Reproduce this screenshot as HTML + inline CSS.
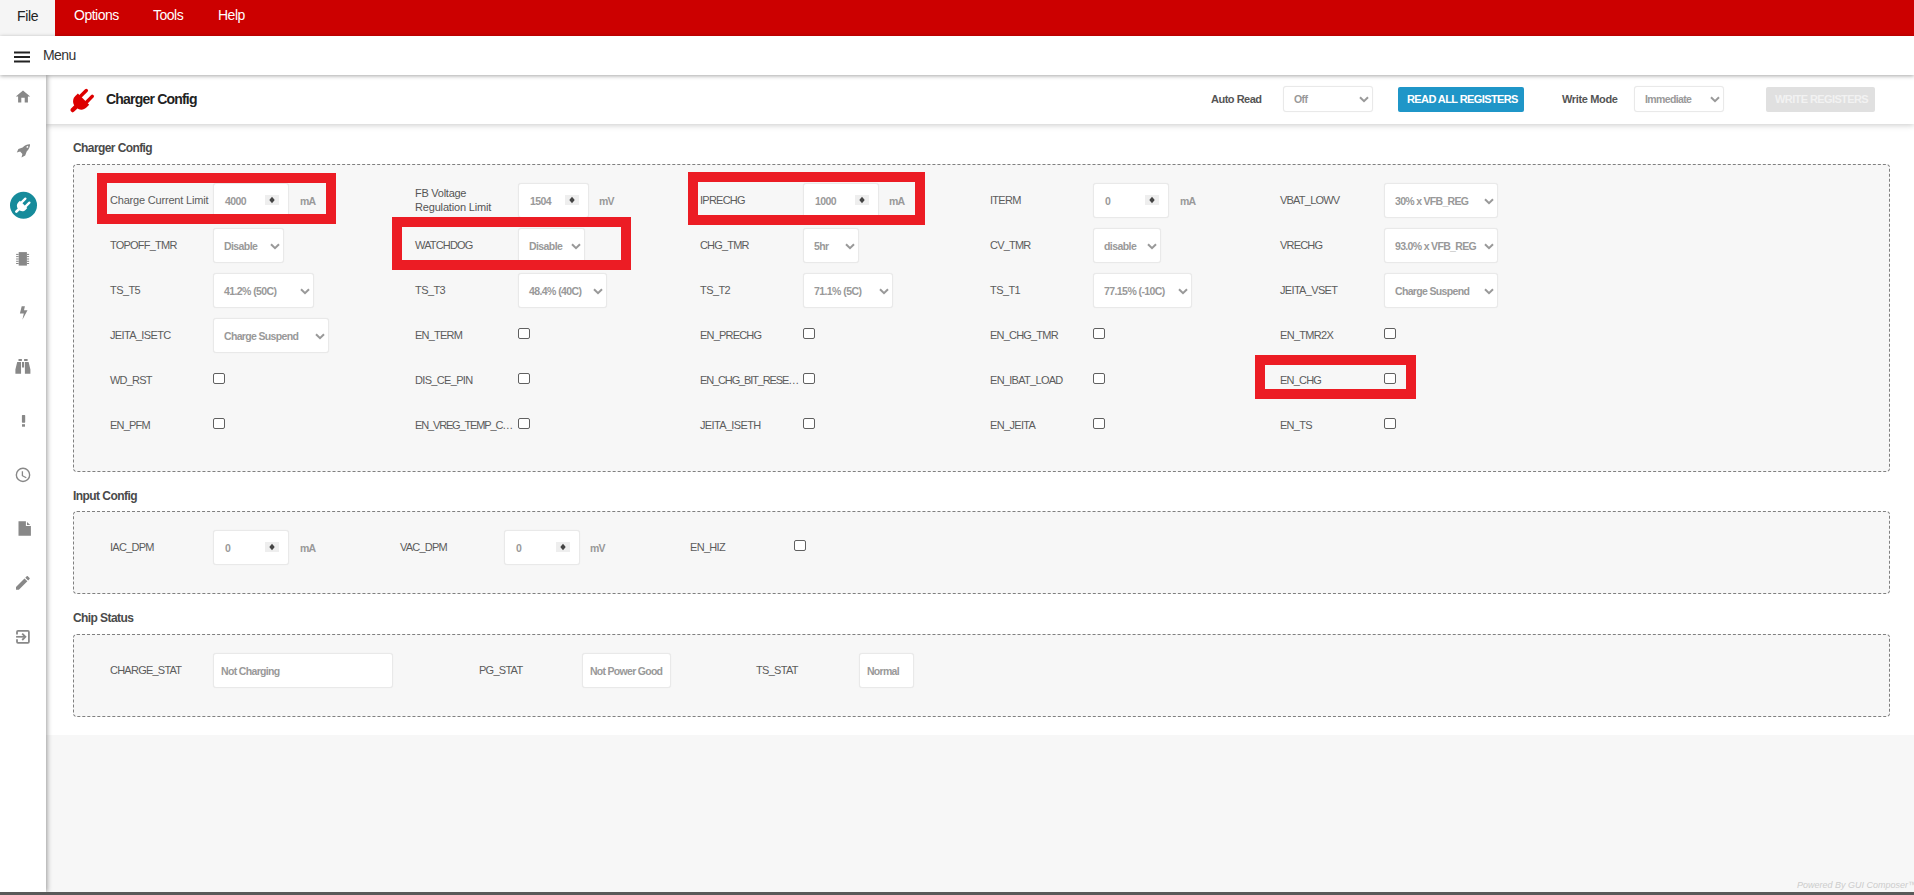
<!DOCTYPE html>
<html><head><meta charset="utf-8">
<style>
*{box-sizing:border-box;margin:0;padding:0}
html,body{width:1914px;height:895px;overflow:hidden;background:#fff;font-family:"Liberation Sans",sans-serif;position:relative}
.a{position:absolute}
.t{white-space:nowrap}
#top{left:0;top:0;width:1914px;height:36px;background:#cc0000}
#file{left:0;top:0;width:55px;height:36px;background:#f5f5f5}
#menubar{left:0;top:36px;width:1914px;height:39px;background:#fff;box-shadow:0 1px 4px rgba(0,0,0,.35);z-index:3}
#side{left:0;top:75px;width:46px;height:817px;background:#fff;box-shadow:1px 0 5px rgba(0,0,0,.4);z-index:2}
#main{left:46px;top:75px;width:1868px;height:817px;background:#f7f7f7}
#hdr{left:46px;top:75px;width:1868px;height:49px;background:#fff;box-shadow:0 1px 6px rgba(0,0,0,.22);z-index:1}
#cont{left:46px;top:124px;width:1868px;height:611px;background:#fff}
#bot{left:0;top:892px;width:1914px;height:3px;background:#595959;z-index:4}
.box{left:73px;width:1817px;border:1px dashed #808080;border-radius:4px;background:#f7f7f7}
.inp{height:35px;background:#fff;border:1px solid #e9e9e9;border-radius:3px;box-shadow:0 0 1px rgba(0,0,0,.08)}
.spin{width:14px;height:10px;background:#eee}
.spin svg{display:block}
.cb{width:12px;height:11px;border:1.4px solid #606060;border-radius:2px;background:#fff}
.rb{border:10px solid #ec1c24;z-index:5}
.inp,.cb,.spin,.chev,.t{z-index:3}
.sic{left:11px;width:24px;height:24px}
#layer{left:0;top:0;width:1914px;height:895px;z-index:6}
</style></head><body>
<div class="a" id="top"></div>
<div class="a" id="file"></div>
<div class="a t" style="left:17px;top:6.5px;font-size:14px;line-height:18px;color:#222;letter-spacing:-0.3px">File</div>
<div class="a t" style="left:74px;top:6.2px;font-size:14px;line-height:18px;color:#fff;letter-spacing:-0.5px">Options</div>
<div class="a t" style="left:153px;top:6.2px;font-size:14px;line-height:18px;color:#fff;letter-spacing:-0.5px">Tools</div>
<div class="a t" style="left:218px;top:6.2px;font-size:14px;line-height:18px;color:#fff;letter-spacing:-0.5px">Help</div>
<div class="a" id="menubar">
  <svg class="a" style="left:14px;top:15px" width="16" height="12" viewBox="0 0 16 12"><rect x="0" y="0.5" width="16" height="2" fill="#222"/><rect x="0" y="5" width="16" height="2" fill="#222"/><rect x="0" y="9.5" width="16" height="2" fill="#222"/></svg>
  <div class="a t" style="left:43px;top:10px;font-size:14px;line-height:18px;color:#333;letter-spacing:-0.6px">Menu</div>
</div>
<div class="a" id="main"></div>
<div class="a" id="cont"></div>
<div class="a" id="hdr">
  <svg class="a" style="left:0;top:0" width="60" height="49" viewBox="46 75 60 49">
    <g transform="translate(71.1 111.6) rotate(-45)" fill="#dd0000">
      <rect x="0" y="-2.2" width="10" height="4.4" rx="2.2"/>
      <path d="M17.6 -8 V8 H14 C9.5 8 6.4 4.6 6.4 0 C6.4 -4.6 9.5 -8 14 -8 Z"/>
      <rect x="15.8" y="-5.9" width="11.6" height="3.4" rx="1.7"/>
      <rect x="15.8" y="2.5" width="11.6" height="3.4" rx="1.7"/>
    </g>
  </svg>
  <div class="a" style="left:1352px;top:12px;width:126px;height:25px;background:#1f96c8;border-radius:2px"></div>
  <div class="a t" style="left:1361px;top:17px;font-size:11px;line-height:15px;font-weight:bold;color:#fff;letter-spacing:-0.6px">READ ALL REGISTERS</div>
  <div class="a" style="left:1720px;top:12px;width:109px;height:25px;background:#e0e0e0;border-radius:2px"></div>
  <div class="a t" style="left:1729px;top:17px;font-size:11px;line-height:15px;font-weight:bold;color:#f2f2f2;letter-spacing:-0.6px">WRITE REGISTERS</div>
</div>
<div class="a box" style="top:164px;height:308px"></div>
<div class="a box" style="top:511px;height:83px"></div>
<div class="a box" style="top:634px;height:83px"></div>
<div class="a t" style="left:1797px;top:879px;font-size:9px;line-height:12px;font-style:italic;color:#ccc">Powered By GUI Composer&#8482;</div>
<div class="a" id="side">
</div>
<svg class="a" style="left:0;top:0;z-index:3" width="46" height="895" viewBox="0 0 46 895">
  <path d="M23 90.4 L30.2 96.6 H27.9 V102.6 H24.7 V97.8 H21.3 V102.6 H18.1 V96.6 H15.8 Z" fill="#888"/>
  <path d="M30 144.3 C27.8 144.1 25 145 22.6 147.4 L18.4 148.9 L16.8 152.5 L20.1 151.6 L22.4 153.9 L21.5 157.6 L25.2 155.4 L26.7 151.6 C29.1 149.2 30.2 146.4 30 144.3 Z" fill="#888"/>
  <circle cx="27.4" cy="146.9" r="0.9" fill="#fff"/>
  <circle cx="23.5" cy="205.3" r="13.5" fill="#168b9b"/>
  <g transform="translate(15.4 212.6) rotate(-45)" fill="#fff">
    <rect x="0" y="-1.35" width="7" height="2.7" rx="1.35"/>
    <path d="M11.6 -5.2 V5.2 H9.4 C6.4 5.2 4.4 3 4.4 0 C4.4 -3 6.4 -5.2 9.4 -5.2 Z"/>
    <rect x="10.5" y="-4" width="7.6" height="2.3" rx="1.15"/>
    <rect x="10.5" y="1.7" width="7.6" height="2.3" rx="1.15"/>
  </g>
  <rect x="18.7" y="252.1" width="8.2" height="13.5" fill="#888"/>
  <path d="M16.1 254.4H18.7M16.1 256.6H18.7M16.1 259H18.7M16.1 261.3H18.7M16.1 263.5H18.7M26.9 254.4H29.1M26.9 256.6H29.1M26.9 259H29.1M26.9 261.3H29.1M26.9 263.5H29.1" stroke="#888" stroke-width="1"/>
  <path d="M21.7 306.3 H24.9 L24 310.3 H27.5 L22.4 319.7 L23.8 313.6 H19.9 Z" fill="#888"/>
  <path d="M18.5 359 H21.9 V360.9 H18.5Z M24.1 359 H27.6 V360.9 H24.1Z M17.2 362 H21.05 V373.8 H15.4 V369.5 Z M22 362 H24.1 V367.6 H22Z M24.9 362 H28.6 L30.4 369.5 V373.8 H24.9 Z" fill="#888"/>
  <rect x="21.9" y="415.1" width="3.3" height="7.6" rx="0.6" fill="#888"/>
  <rect x="22" y="424.2" width="3" height="2.5" fill="#888"/>
  <circle cx="23" cy="474.9" r="6.65" fill="none" stroke="#888" stroke-width="1.4"/>
  <path d="M22.4 471.2 V475.7 L26.3 477.8" fill="none" stroke="#888" stroke-width="1.3"/>
  <path d="M18.5 521.2 H25.9 V526 H30.9 V535.7 H18.5 Z M27 521.9 L30.2 525 H27 Z" fill="#888"/>
  <path transform="translate(13.7 573.7) scale(0.767)" d="M3 17.25V21h3.75L17.81 9.94l-3.75-3.75L3 17.25zM20.71 7.04c.39-.39.39-1.02 0-1.41l-2.34-2.34c-.39-.39-1.02-.39-1.41 0l-1.83 1.83 3.75 3.75 1.83-1.83z" fill="#888"/>
  <path d="M17 634.6 V631.9 Q17 630.9 18 630.9 H27.9 Q28.9 630.9 28.9 631.9 V641.8 Q28.9 642.8 27.9 642.8 H18 Q17 642.8 17 641.8 V639.2" fill="none" stroke="#888" stroke-width="1.8"/>
  <path d="M16.1 636.8 H24.5" stroke="#888" stroke-width="1.7"/>
  <path d="M22.2 633.6 L25.4 636.8 L22.2 640" fill="none" stroke="#888" stroke-width="1.8"/>
</svg>
<div class="a" id="bot"></div>
<div class="a inp" style="left:213px;top:183.0px;width:76px"></div>
<div class="a spin" style="left:265px;top:194.5px"><svg width="14" height="10" viewBox="0 0 14 10"><path d="M7 1.7 L9.7 5 L7 8.3 L4.3 5Z" fill="#444"/></svg></div>
<div class="a inp" style="left:518px;top:183.0px;width:71px"></div>
<div class="a spin" style="left:565px;top:194.5px"><svg width="14" height="10" viewBox="0 0 14 10"><path d="M7 1.7 L9.7 5 L7 8.3 L4.3 5Z" fill="#444"/></svg></div>
<div class="a inp" style="left:803px;top:183.0px;width:76px"></div>
<div class="a spin" style="left:855px;top:194.5px"><svg width="14" height="10" viewBox="0 0 14 10"><path d="M7 1.7 L9.7 5 L7 8.3 L4.3 5Z" fill="#444"/></svg></div>
<div class="a inp" style="left:1093px;top:183.0px;width:76px"></div>
<div class="a spin" style="left:1145px;top:194.5px"><svg width="14" height="10" viewBox="0 0 14 10"><path d="M7 1.7 L9.7 5 L7 8.3 L4.3 5Z" fill="#444"/></svg></div>
<div class="a inp" style="left:1384px;top:183.0px;width:114px;height:35px"></div>
<svg class="a chev" style="left:1484px;top:197.5px" width="10" height="7" viewBox="0 0 10 7"><path d="M1 1.2 L5 5.2 L9 1.2" fill="none" stroke="#999" stroke-width="2"/></svg>
<div class="a inp" style="left:213px;top:228.0px;width:71px;height:35px"></div>
<svg class="a chev" style="left:270px;top:242.5px" width="10" height="7" viewBox="0 0 10 7"><path d="M1 1.2 L5 5.2 L9 1.2" fill="none" stroke="#999" stroke-width="2"/></svg>
<div class="a inp" style="left:518px;top:228.0px;width:67px;height:35px"></div>
<svg class="a chev" style="left:571px;top:242.5px" width="10" height="7" viewBox="0 0 10 7"><path d="M1 1.2 L5 5.2 L9 1.2" fill="none" stroke="#999" stroke-width="2"/></svg>
<div class="a inp" style="left:803px;top:228.0px;width:56px;height:35px"></div>
<svg class="a chev" style="left:845px;top:242.5px" width="10" height="7" viewBox="0 0 10 7"><path d="M1 1.2 L5 5.2 L9 1.2" fill="none" stroke="#999" stroke-width="2"/></svg>
<div class="a inp" style="left:1093px;top:228.0px;width:68px;height:35px"></div>
<svg class="a chev" style="left:1147px;top:242.5px" width="10" height="7" viewBox="0 0 10 7"><path d="M1 1.2 L5 5.2 L9 1.2" fill="none" stroke="#999" stroke-width="2"/></svg>
<div class="a inp" style="left:1384px;top:228.0px;width:114px;height:35px"></div>
<svg class="a chev" style="left:1484px;top:242.5px" width="10" height="7" viewBox="0 0 10 7"><path d="M1 1.2 L5 5.2 L9 1.2" fill="none" stroke="#999" stroke-width="2"/></svg>
<div class="a inp" style="left:213px;top:273.0px;width:101px;height:35px"></div>
<svg class="a chev" style="left:300px;top:287.5px" width="10" height="7" viewBox="0 0 10 7"><path d="M1 1.2 L5 5.2 L9 1.2" fill="none" stroke="#999" stroke-width="2"/></svg>
<div class="a inp" style="left:518px;top:273.0px;width:89px;height:35px"></div>
<svg class="a chev" style="left:593px;top:287.5px" width="10" height="7" viewBox="0 0 10 7"><path d="M1 1.2 L5 5.2 L9 1.2" fill="none" stroke="#999" stroke-width="2"/></svg>
<div class="a inp" style="left:803px;top:273.0px;width:90px;height:35px"></div>
<svg class="a chev" style="left:879px;top:287.5px" width="10" height="7" viewBox="0 0 10 7"><path d="M1 1.2 L5 5.2 L9 1.2" fill="none" stroke="#999" stroke-width="2"/></svg>
<div class="a inp" style="left:1093px;top:273.0px;width:99px;height:35px"></div>
<svg class="a chev" style="left:1178px;top:287.5px" width="10" height="7" viewBox="0 0 10 7"><path d="M1 1.2 L5 5.2 L9 1.2" fill="none" stroke="#999" stroke-width="2"/></svg>
<div class="a inp" style="left:1384px;top:273.0px;width:114px;height:35px"></div>
<svg class="a chev" style="left:1484px;top:287.5px" width="10" height="7" viewBox="0 0 10 7"><path d="M1 1.2 L5 5.2 L9 1.2" fill="none" stroke="#999" stroke-width="2"/></svg>
<div class="a inp" style="left:213px;top:318.0px;width:116px;height:35px"></div>
<svg class="a chev" style="left:315px;top:332.5px" width="10" height="7" viewBox="0 0 10 7"><path d="M1 1.2 L5 5.2 L9 1.2" fill="none" stroke="#999" stroke-width="2"/></svg>
<div class="a cb" style="left:518px;top:328.0px"></div>
<div class="a cb" style="left:803px;top:328.0px"></div>
<div class="a cb" style="left:1093px;top:328.0px"></div>
<div class="a cb" style="left:1384px;top:328.0px"></div>
<div class="a cb" style="left:213px;top:373.0px"></div>
<div class="a cb" style="left:518px;top:373.0px"></div>
<div class="a cb" style="left:803px;top:373.0px"></div>
<div class="a cb" style="left:1093px;top:373.0px"></div>
<div class="a cb" style="left:1384px;top:373.0px"></div>
<div class="a cb" style="left:213px;top:418.0px"></div>
<div class="a cb" style="left:518px;top:418.0px"></div>
<div class="a cb" style="left:803px;top:418.0px"></div>
<div class="a cb" style="left:1093px;top:418.0px"></div>
<div class="a cb" style="left:1384px;top:418.0px"></div>
<div class="a inp" style="left:213px;top:530px;width:76px"></div>
<div class="a spin" style="left:265px;top:541.5px"><svg width="14" height="10" viewBox="0 0 14 10"><path d="M7 1.7 L9.7 5 L7 8.3 L4.3 5Z" fill="#444"/></svg></div>
<div class="a inp" style="left:504px;top:530px;width:76px"></div>
<div class="a spin" style="left:556px;top:541.5px"><svg width="14" height="10" viewBox="0 0 14 10"><path d="M7 1.7 L9.7 5 L7 8.3 L4.3 5Z" fill="#444"/></svg></div>
<div class="a cb" style="left:794px;top:540px"></div>
<div class="a inp" style="left:213px;top:653px;width:180px;height:35px"></div>
<div class="a inp" style="left:582px;top:653px;width:89px;height:35px"></div>
<div class="a inp" style="left:859px;top:653px;width:55px;height:35px"></div>
<div class="a inp" style="left:1283px;top:86px;width:90px;height:26px"></div>
<svg class="a chev" style="left:1359px;top:96.0px" width="10" height="7" viewBox="0 0 10 7"><path d="M1 1.2 L5 5.2 L9 1.2" fill="none" stroke="#999" stroke-width="2"/></svg>
<div class="a inp" style="left:1634px;top:86px;width:90px;height:26px"></div>
<svg class="a chev" style="left:1710px;top:96.0px" width="10" height="7" viewBox="0 0 10 7"><path d="M1 1.2 L5 5.2 L9 1.2" fill="none" stroke="#999" stroke-width="2"/></svg>
<div class="a t" style="left:110px;top:193.0px;font-size:11px;line-height:15px;font-weight:normal;color:#5c5c5c;letter-spacing:-0.19px">Charge Current Limit</div>
<div class="a t" style="left:225px;top:193.8px;font-size:10.5px;line-height:14.5px;font-weight:bold;color:#999;letter-spacing:-0.58px">4000</div>
<div class="a t" style="left:300px;top:193.8px;font-size:10.5px;line-height:14.5px;font-weight:bold;color:#999;letter-spacing:-0.93px">mA</div>
<div class="a t" style="left:415px;top:186.0px;font-size:11px;line-height:15px;font-weight:normal;color:#555;letter-spacing:-0.26px">FB Voltage</div>
<div class="a t" style="left:415px;top:200.0px;font-size:11px;line-height:15px;font-weight:normal;color:#555;letter-spacing:-0.17px">Regulation Limit</div>
<div class="a t" style="left:530px;top:193.8px;font-size:10.5px;line-height:14.5px;font-weight:bold;color:#999;letter-spacing:-0.58px">1504</div>
<div class="a t" style="left:599px;top:193.8px;font-size:10.5px;line-height:14.5px;font-weight:bold;color:#999;letter-spacing:-0.90px">mV</div>
<div class="a t" style="left:700px;top:193.0px;font-size:11px;line-height:15px;font-weight:normal;color:#5c5c5c;letter-spacing:-0.75px">IPRECHG</div>
<div class="a t" style="left:815px;top:193.8px;font-size:10.5px;line-height:14.5px;font-weight:bold;color:#999;letter-spacing:-0.58px">1000</div>
<div class="a t" style="left:889px;top:193.8px;font-size:10.5px;line-height:14.5px;font-weight:bold;color:#999;letter-spacing:-0.93px">mA</div>
<div class="a t" style="left:990px;top:193.0px;font-size:11px;line-height:15px;font-weight:normal;color:#5c5c5c;letter-spacing:-0.72px">ITERM</div>
<div class="a t" style="left:1105px;top:193.8px;font-size:10.5px;line-height:14.5px;font-weight:bold;color:#999;letter-spacing:-0.58px">0</div>
<div class="a t" style="left:1180px;top:193.8px;font-size:10.5px;line-height:14.5px;font-weight:bold;color:#999;letter-spacing:-0.93px">mA</div>
<div class="a t" style="left:1280px;top:193.0px;font-size:11px;line-height:15px;font-weight:normal;color:#5c5c5c;letter-spacing:-0.78px">VBAT_LOWV</div>
<div class="a t" style="left:1395px;top:193.8px;font-size:10.5px;line-height:14.5px;font-weight:bold;color:#999;letter-spacing:-0.70px">30% x VFB_REG</div>
<div class="a t" style="left:110px;top:238.0px;font-size:11px;line-height:15px;font-weight:normal;color:#5c5c5c;letter-spacing:-0.78px">TOPOFF_TMR</div>
<div class="a t" style="left:224px;top:238.8px;font-size:10.5px;line-height:14.5px;font-weight:bold;color:#999;letter-spacing:-0.59px">Disable</div>
<div class="a t" style="left:415px;top:238.0px;font-size:11px;line-height:15px;font-weight:normal;color:#5c5c5c;letter-spacing:-0.84px">WATCHDOG</div>
<div class="a t" style="left:529px;top:238.8px;font-size:10.5px;line-height:14.5px;font-weight:bold;color:#999;letter-spacing:-0.59px">Disable</div>
<div class="a t" style="left:700px;top:238.0px;font-size:11px;line-height:15px;font-weight:normal;color:#5c5c5c;letter-spacing:-0.82px">CHG_TMR</div>
<div class="a t" style="left:814px;top:238.8px;font-size:10.5px;line-height:14.5px;font-weight:bold;color:#999;letter-spacing:-0.60px">5hr</div>
<div class="a t" style="left:990px;top:238.0px;font-size:11px;line-height:15px;font-weight:normal;color:#5c5c5c;letter-spacing:-0.79px">CV_TMR</div>
<div class="a t" style="left:1104px;top:238.8px;font-size:10.5px;line-height:14.5px;font-weight:bold;color:#999;letter-spacing:-0.57px">disable</div>
<div class="a t" style="left:1280px;top:238.0px;font-size:11px;line-height:15px;font-weight:normal;color:#5c5c5c;letter-spacing:-0.82px">VRECHG</div>
<div class="a t" style="left:1395px;top:238.8px;font-size:10.5px;line-height:14.5px;font-weight:bold;color:#999;letter-spacing:-0.67px">93.0% x VFB_REG</div>
<div class="a t" style="left:110px;top:283.0px;font-size:11px;line-height:15px;font-weight:normal;color:#5c5c5c;letter-spacing:-0.59px">TS_T5</div>
<div class="a t" style="left:224px;top:283.8px;font-size:10.5px;line-height:14.5px;font-weight:bold;color:#999;letter-spacing:-0.59px">41.2% (50C)</div>
<div class="a t" style="left:415px;top:283.0px;font-size:11px;line-height:15px;font-weight:normal;color:#5c5c5c;letter-spacing:-0.59px">TS_T3</div>
<div class="a t" style="left:529px;top:283.8px;font-size:10.5px;line-height:14.5px;font-weight:bold;color:#999;letter-spacing:-0.59px">48.4% (40C)</div>
<div class="a t" style="left:700px;top:283.0px;font-size:11px;line-height:15px;font-weight:normal;color:#5c5c5c;letter-spacing:-0.59px">TS_T2</div>
<div class="a t" style="left:814px;top:283.8px;font-size:10.5px;line-height:14.5px;font-weight:bold;color:#999;letter-spacing:-0.58px">71.1% (5C)</div>
<div class="a t" style="left:990px;top:283.0px;font-size:11px;line-height:15px;font-weight:normal;color:#5c5c5c;letter-spacing:-0.59px">TS_T1</div>
<div class="a t" style="left:1104px;top:283.8px;font-size:10.5px;line-height:14.5px;font-weight:bold;color:#999;letter-spacing:-0.58px">77.15% (-10C)</div>
<div class="a t" style="left:1280px;top:283.0px;font-size:11px;line-height:15px;font-weight:normal;color:#5c5c5c;letter-spacing:-0.67px">JEITA_VSET</div>
<div class="a t" style="left:1395px;top:283.8px;font-size:10.5px;line-height:14.5px;font-weight:bold;color:#999;letter-spacing:-0.66px">Charge Suspend</div>
<div class="a t" style="left:110px;top:328.0px;font-size:11px;line-height:15px;font-weight:normal;color:#5c5c5c;letter-spacing:-0.65px">JEITA_ISETC</div>
<div class="a t" style="left:224px;top:328.8px;font-size:10.5px;line-height:14.5px;font-weight:bold;color:#999;letter-spacing:-0.66px">Charge Suspend</div>
<div class="a t" style="left:415px;top:328.0px;font-size:11px;line-height:15px;font-weight:normal;color:#5c5c5c;letter-spacing:-0.79px">EN_TERM</div>
<div class="a t" style="left:700px;top:328.0px;font-size:11px;line-height:15px;font-weight:normal;color:#5c5c5c;letter-spacing:-0.80px">EN_PRECHG</div>
<div class="a t" style="left:990px;top:328.0px;font-size:11px;line-height:15px;font-weight:normal;color:#5c5c5c;letter-spacing:-0.80px">EN_CHG_TMR</div>
<div class="a t" style="left:1280px;top:328.0px;font-size:11px;line-height:15px;font-weight:normal;color:#5c5c5c;letter-spacing:-0.70px">EN_TMR2X</div>
<div class="a t" style="left:110px;top:373.0px;font-size:11px;line-height:15px;font-weight:normal;color:#5c5c5c;letter-spacing:-0.81px">WD_RST</div>
<div class="a t" style="left:415px;top:373.0px;font-size:11px;line-height:15px;font-weight:normal;color:#5c5c5c;letter-spacing:-0.67px">DIS_CE_PIN</div>
<div class="a t" style="left:700px;top:373.0px;font-size:11px;line-height:15px;font-weight:normal;color:#5c5c5c;letter-spacing:-1.13px">EN_CHG_BIT_RESE…</div>
<div class="a t" style="left:990px;top:373.0px;font-size:11px;line-height:15px;font-weight:normal;color:#5c5c5c;letter-spacing:-0.71px">EN_IBAT_LOAD</div>
<div class="a t" style="left:1280px;top:373.0px;font-size:11px;line-height:15px;font-weight:normal;color:#5c5c5c;letter-spacing:-0.80px">EN_CHG</div>
<div class="a t" style="left:110px;top:418.0px;font-size:11px;line-height:15px;font-weight:normal;color:#5c5c5c;letter-spacing:-0.78px">EN_PFM</div>
<div class="a t" style="left:415px;top:418.0px;font-size:11px;line-height:15px;font-weight:normal;color:#5c5c5c;letter-spacing:-1.15px">EN_VREG_TEMP_C…</div>
<div class="a t" style="left:700px;top:418.0px;font-size:11px;line-height:15px;font-weight:normal;color:#5c5c5c;letter-spacing:-0.65px">JEITA_ISETH</div>
<div class="a t" style="left:990px;top:418.0px;font-size:11px;line-height:15px;font-weight:normal;color:#5c5c5c;letter-spacing:-0.66px">EN_JEITA</div>
<div class="a t" style="left:1280px;top:418.0px;font-size:11px;line-height:15px;font-weight:normal;color:#5c5c5c;letter-spacing:-0.74px">EN_TS</div>
<div class="a t" style="left:110px;top:539.5px;font-size:11px;line-height:15px;font-weight:normal;color:#5c5c5c;letter-spacing:-0.73px">IAC_DPM</div>
<div class="a t" style="left:225px;top:540.8px;font-size:10.5px;line-height:14.5px;font-weight:bold;color:#999;letter-spacing:-0.58px">0</div>
<div class="a t" style="left:300px;top:540.8px;font-size:10.5px;line-height:14.5px;font-weight:bold;color:#999;letter-spacing:-0.93px">mA</div>
<div class="a t" style="left:400px;top:539.5px;font-size:11px;line-height:15px;font-weight:normal;color:#5c5c5c;letter-spacing:-0.79px">VAC_DPM</div>
<div class="a t" style="left:516px;top:540.8px;font-size:10.5px;line-height:14.5px;font-weight:bold;color:#999;letter-spacing:-0.58px">0</div>
<div class="a t" style="left:590px;top:540.8px;font-size:10.5px;line-height:14.5px;font-weight:bold;color:#999;letter-spacing:-0.90px">mV</div>
<div class="a t" style="left:690px;top:539.5px;font-size:11px;line-height:15px;font-weight:normal;color:#5c5c5c;letter-spacing:-0.68px">EN_HIZ</div>
<div class="a t" style="left:110px;top:662.5px;font-size:11px;line-height:15px;font-weight:normal;color:#5c5c5c;letter-spacing:-0.76px">CHARGE_STAT</div>
<div class="a t" style="left:221px;top:664.2px;font-size:10.5px;line-height:14.5px;font-weight:bold;color:#999;letter-spacing:-0.66px">Not Charging</div>
<div class="a t" style="left:479px;top:662.5px;font-size:11px;line-height:15px;font-weight:normal;color:#5c5c5c;letter-spacing:-0.73px">PG_STAT</div>
<div class="a t" style="left:590px;top:664.2px;font-size:10.5px;line-height:14.5px;font-weight:bold;color:#999;letter-spacing:-0.71px">Not Power Good</div>
<div class="a t" style="left:756px;top:662.5px;font-size:11px;line-height:15px;font-weight:normal;color:#5c5c5c;letter-spacing:-0.70px">TS_STAT</div>
<div class="a t" style="left:867px;top:664.2px;font-size:10.5px;line-height:14.5px;font-weight:bold;color:#999;letter-spacing:-0.72px">Normal</div>
<div class="a t" style="left:73px;top:139.5px;font-size:12px;line-height:16px;font-weight:bold;color:#4a4a4a;letter-spacing:-0.59px">Charger Config</div>
<div class="a t" style="left:73px;top:487.5px;font-size:12px;line-height:16px;font-weight:bold;color:#4a4a4a;letter-spacing:-0.56px">Input Config</div>
<div class="a t" style="left:73px;top:609.5px;font-size:12px;line-height:16px;font-weight:bold;color:#4a4a4a;letter-spacing:-0.58px">Chip Status</div>
<div class="a t" style="left:106px;top:90.0px;font-size:14px;line-height:18px;font-weight:bold;color:#222;letter-spacing:-0.80px">Charger Config</div>
<div class="a t" style="left:1211px;top:91.5px;font-size:11px;line-height:15px;font-weight:bold;color:#555;letter-spacing:-0.49px">Auto Read</div>
<div class="a t" style="left:1294px;top:92.2px;font-size:10.5px;line-height:14.5px;font-weight:bold;color:#999;letter-spacing:-0.56px">Off</div>
<div class="a t" style="left:1562px;top:91.5px;font-size:11px;line-height:15px;font-weight:bold;color:#555;letter-spacing:-0.35px">Write Mode</div>
<div class="a t" style="left:1645px;top:92.2px;font-size:10.5px;line-height:14.5px;font-weight:bold;color:#999;letter-spacing:-0.63px">Immediate</div>
<div class="a rb" style="left:97px;top:173px;width:239px;height:51px"></div><div class="a rb" style="left:392px;top:217px;width:239px;height:53px"></div><div class="a rb" style="left:688px;top:172px;width:237px;height:53px"></div><div class="a rb" style="left:1255px;top:355px;width:161px;height:44px"></div>
</body></html>
